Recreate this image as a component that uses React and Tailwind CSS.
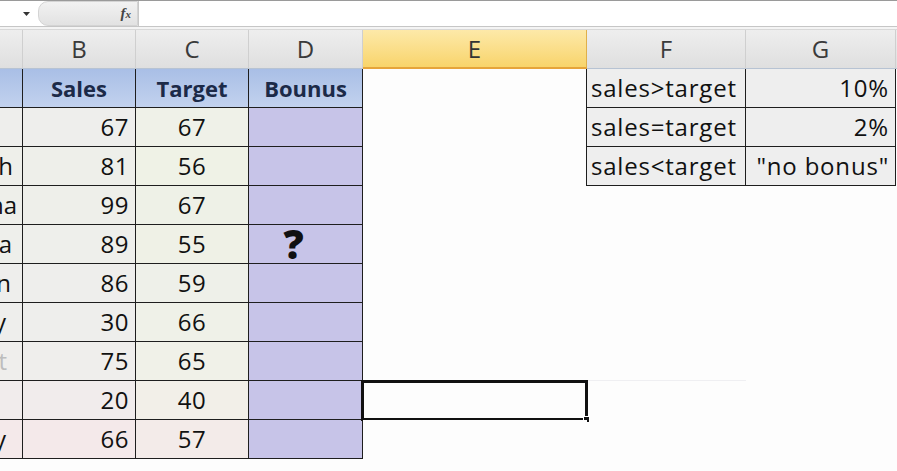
const font = "font-['Open_Sans','Noto_Sans',sans-serif]";

const headers = [
  { label: "", w: "w-[23px]" },
  { label: "B", w: "w-[113px]" },
  { label: "C", w: "w-[113px]" },
  { label: "D", w: "w-[114px]" },
  { label: "E", w: "w-[224px]", active: true },
  { label: "F", w: "w-[159px]" },
  { label: "G", w: "w-[150px]" },
];

const rows = [
  { a: "", pa: "pr-[8px]", b: "67", c: "67", bg: "bg-[#eeeeec]", bgc: "bg-[#eff1e8]" },
  { a: "h", pa: "pr-[9px]", b: "81", c: "56", bg: "bg-[#eeefea]", bgc: "bg-[#eff2e6]" },
  { a: "na", pa: "pr-[5px]", b: "99", c: "67", bg: "bg-[#eeefea]", bgc: "bg-[#eef1e7]" },
  { a: "a", pa: "pr-[10px]", b: "89", c: "55", bg: "bg-[#eeefeb]", bgc: "bg-[#eff1e6]" },
  { a: "n", pa: "pr-[11px]", b: "86", c: "59", bg: "bg-[#eeeeec]", bgc: "bg-[#eef0e9]" },
  { a: "ly", pa: "pr-[16px]", b: "30", c: "66", bg: "bg-[#eeeeec]", bgc: "bg-[#eff1e8]" },
  { a: "t", pa: "pr-[15px]", b: "75", c: "65", bg: "bg-[#efeeec]", bgc: "bg-[#f0f1e8]" },
  { a: "", pa: "pr-[8px]", b: "20", c: "40", bg: "bg-[#f1ecec]", bgc: "bg-[#f2efe8]" },
  { a: "ly", pa: "pr-[16px]", b: "66", c: "57", bg: "bg-[#f4e9ea]", bgc: "bg-[#f3ebe9]" },
];

const lookup = [
  { f: "sales>target", g: "10%" },
  { f: "sales=target", g: "2%" },
  { f: "sales<target", g: '"no bonus"' },
];

function FormulaBar() {
  return (
    <div className="flex h-[26px] border-t border-[#9a9a9a] bg-white">
      <div className="flex w-[38px] items-center justify-end pr-[8px]">
        <svg width="7" height="4" viewBox="0 0 7 4">
          <path d="M0 0h7L3.5 4z" fill="#333" />
        </svg>
      </div>
      <div className="flex w-[100px] items-center justify-end rounded-l-[10px] bg-gradient-to-b from-[#f2f2f2] to-[#e2e2e2] pr-[6px] border border-[#d4d4d4]">
        <span className="font-['Liberation_Serif',serif] text-[15px] italic font-bold text-[#444] leading-none">
          f<span className="text-[11px]">x</span>
        </span>
      </div>
      <div className="flex-1 border-l border-[#c8c8c8] bg-white" />
    </div>
  );
}

function ColumnHeaders() {
  return (
    <div className="flex h-[39px]">
      {headers.map((h, i) => (
        <div
          key={i}
          className={
            h.active
              ? `${h.w} shrink-0 flex items-center justify-center border-r border-[#e0b04a] border-b-2 border-b-[#e6a43a] bg-gradient-to-b from-[#fde9a8] to-[#f8d46a] text-[24px] text-[#333]`
              : `${h.w} shrink-0 flex items-center justify-center border-r border-[#cfcfcf] border-b border-b-[#b7c3d3] bg-gradient-to-b from-[#eeeeee] to-[#dfdfdf] text-[24px] text-[#3a3a3a]`
          }
        >
          {h.label}
        </div>
      ))}
      <div className="flex-1 border-b border-[#b7c3d3] bg-gradient-to-b from-[#eeeeee] to-[#dfdfdf]" />
    </div>
  );
}

function HeaderRow() {
  return (
    <div className="flex h-[39px]">
      <div className="w-[23px] shrink-0 border-r border-b border-[#1e1e1e] bg-gradient-to-b from-[#a9bfe6] to-[#c2d2ee]" />
      {["Sales", "Target", "Bounus"].map((t, i) => (
        <div
          key={t}
          className={`${i === 2 ? "w-[114px]" : "w-[113px]"} shrink-0 flex items-center justify-center border-r border-b border-[#1e1e1e] bg-gradient-to-b from-[#a9bfe6] to-[#c2d2ee] text-[22px] font-bold text-[#1c2a48]`}
        >
          {t}
        </div>
      ))}
      <div className="w-[224px] shrink-0 border-r border-[#1e1e1e] bg-[#fdfdfd]" />
      <LookupCells row={lookup[0]} />
    </div>
  );
}

function LookupCells({ row }) {
  return (
    <>
      <div className="w-[159px] shrink-0 flex items-center border-r border-b border-[#1e1e1e] bg-[#eeeeee] pl-[4px] text-[24px] tracking-[0.8px] text-[#111] whitespace-nowrap">
        {row.f}
      </div>
      <div className="w-[150px] shrink-0 flex items-center justify-end border-r border-b border-[#1e1e1e] bg-[#eeeeee] pr-[6px] text-[24px] tracking-[0.8px] text-[#111] whitespace-nowrap">
        {row.g}
      </div>
    </>
  );
}

function DataRow({ r, i }) {
  const l = lookup[i + 1];
  return (
    <div className="flex h-[39px]">
      <div
        className={`w-[23px] shrink-0 flex items-center justify-end overflow-hidden border-r border-b border-[#1e1e1e] ${r.bg} ${r.pa} text-[24px] ${i === 6 ? "text-[#bdbdbd]" : "text-[#111]"}`}
      >
        <span className="whitespace-nowrap">{r.a}</span>
      </div>
      <div className={`w-[113px] shrink-0 flex items-center justify-end border-r border-b border-[#1e1e1e] ${r.bg} pr-[6px] text-[24px] tracking-[0.5px] text-[#111]`}>
        {r.b}
      </div>
      <div className={`w-[113px] shrink-0 flex items-center justify-center border-r border-b border-[#1e1e1e] ${r.bgc} text-[24px] tracking-[0.5px] text-[#111]`}>
        {r.c}
      </div>
      <div className="w-[114px] shrink-0 flex items-center justify-center border-r border-b border-[#1e1e1e] bg-[#c7c4e8] pr-[24px] text-[40px] font-extrabold leading-none text-[#111]">
        {i === 3 ? "?" : ""}
      </div>
      <div className={`relative w-[224px] shrink-0 ${l ? "border-r border-[#1e1e1e]" : ""} bg-[#fdfdfd]`}>
        {i === 7 && (
          <div className="absolute -left-[2px] -top-[1px] -right-[1px] -bottom-[1px] border-[3px] border-[#111]">
            <div className="absolute -right-[5px] -bottom-[5px] h-[7px] w-[7px] border border-white bg-[#111]" />
          </div>
        )}
      </div>
      {l ? (
        <LookupCells row={l} />
      ) : (
        <div className={`w-[159px] shrink-0 ${i === 6 ? "border-b border-[#efeff2]" : ""}`} />
      )}
    </div>
  );
}

export default function App() {
  return (
    <div className={`w-[897px] h-[471px] overflow-hidden bg-[#fdfdfd] ${font}`}>
      <FormulaBar />
      <div className="h-[4px] border-t border-[#c6c6c6] border-b border-b-[#d8d8d8] bg-[#f4f4f4]" />
      <ColumnHeaders />
      <HeaderRow />
      {rows.map((r, i) => (
        <DataRow key={i} r={r} i={i} />
      ))}
    </div>
  );
}
